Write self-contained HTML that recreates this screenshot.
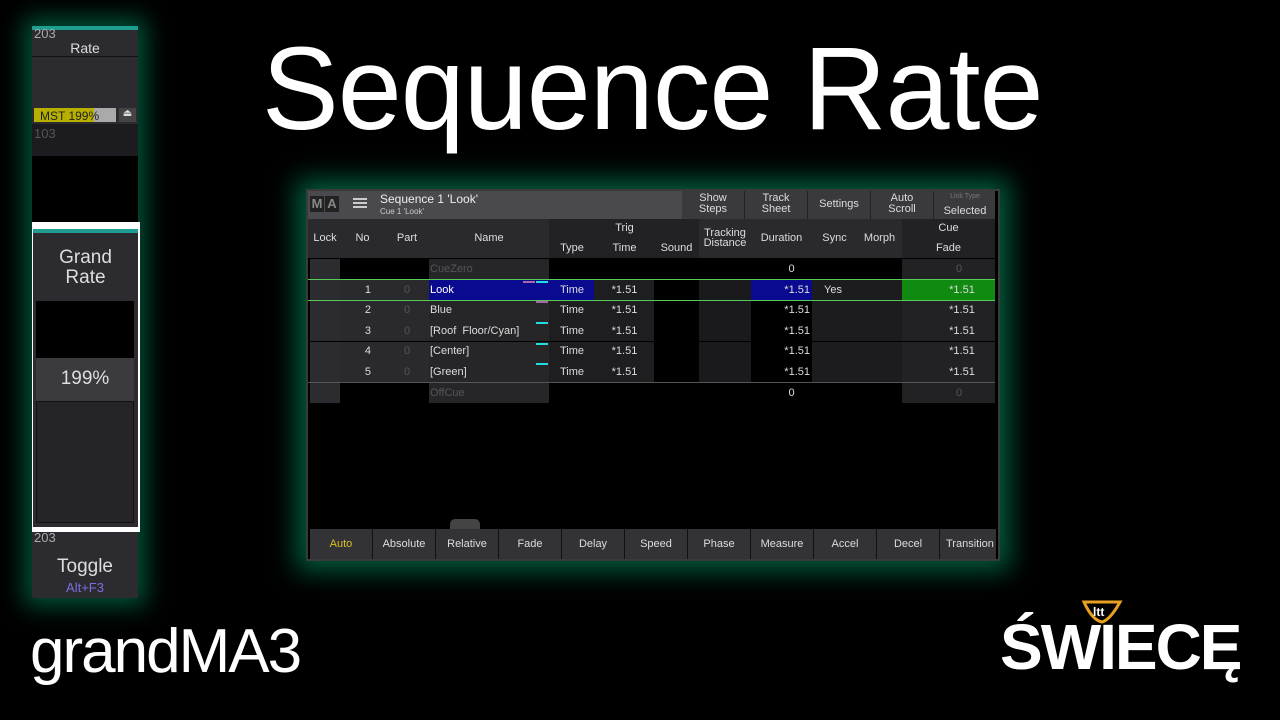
<!DOCTYPE html>
<html><head><meta charset="utf-8"><style>
*{margin:0;padding:0;box-sizing:border-box}
body{width:1280px;height:720px;background:#000;position:relative;overflow:hidden;font-family:"Liberation Sans",sans-serif;color:#ddd}
.a{position:absolute}
.t{font-size:11px;color:#ddd;white-space:nowrap}
.c{text-align:center}
.r{text-align:right}
</style></head><body>
<div class="a" style="left:262px;top:14px;font-size:118px;color:#fff;letter-spacing:-1px;line-height:150px;transform:scaleX(0.975);transform-origin:left">Sequence Rate</div>
<div class="a" style="left:30px;top:612px;font-size:62px;color:#fff;line-height:80px;letter-spacing:-2px">grandMA3</div>

<!-- left strip -->
<div class="a" style="left:32px;top:26px;width:106px;height:572px;background:#2c2c30;box-shadow:0 0 22px 8px rgba(0,150,100,.55)"></div>
<div class="a" style="left:32px;top:26px;width:106px;height:4px;background:#1e9e90"></div>
<div class="a t" style="left:34px;top:26px;color:#aaa;font-size:13px">203</div>
<div class="a t c" style="left:32px;top:40px;width:106px;font-size:14px">Rate</div>
<div class="a" style="left:32px;top:56px;width:106px;height:1px;background:#111"></div>
<div class="a" style="left:34px;top:108px;width:82px;height:14px;background:#aaa"></div>
<div class="a" style="left:34px;top:108px;width:60px;height:14px;background:#b8b000"></div>
<div class="a t" style="left:40px;top:109px;color:#222;font-size:12px">MST 199%</div>
<div class="a" style="left:119px;top:108px;width:17px;height:14px;background:#444;color:#ddd;font-size:10px;text-align:center">⏏</div>
<div class="a" style="left:32px;top:124px;width:106px;height:98px;background:#000"></div>
<div class="a" style="left:32px;top:124px;width:106px;height:32px;background:#1c1c20"></div>
<div class="a t" style="left:34px;top:126px;color:#555;font-size:13px">103</div>
<div class="a" style="left:32px;top:222px;width:108px;height:310px;background:#fff"></div>
<div class="a" style="left:33px;top:229px;width:105px;height:298px;background:#2c2c30"></div>
<div class="a" style="left:33px;top:229px;width:105px;height:4px;background:#1e9e90"></div>
<div class="a c" style="left:33px;top:248px;width:105px;font-size:19px;line-height:20px;color:#ddd">Grand<br>Rate</div>
<div class="a" style="left:36px;top:301px;width:98px;height:57px;background:#000"></div>
<div class="a" style="left:36px;top:358px;width:98px;height:43px;background:#3a3a3f"></div>
<div class="a c" style="left:36px;top:368px;width:98px;font-size:19px;color:#ddd">199%</div>
<div class="a" style="left:36px;top:401px;width:98px;height:122px;background:#252528;border:1px solid #111"></div>
<div class="a t" style="left:34px;top:530px;color:#aaa;font-size:13px">203</div>
<div class="a c" style="left:32px;top:556px;width:106px;font-size:19px;color:#ddd">Toggle</div>
<div class="a c" style="left:32px;top:580px;width:106px;font-size:13px;color:#7a6ee0">Alt+F3</div>

<!-- panel -->
<div class="a" style="left:306px;top:189px;width:694px;height:372px;background:#000;border:2px solid #3a3a3a;box-shadow:0 0 24px 10px rgba(0,150,100,.6)"></div>
<div class="a" style="left:308px;top:191px;width:374px;height:28px;background:#4a4a4e"></div>
<div class="a" style="left:310px;top:196px;width:14px;height:16px;background:#222;color:#888;font-weight:bold;font-size:13px;line-height:16px;text-align:center">M</div>
<div class="a" style="left:325px;top:196px;width:14px;height:16px;background:#222;color:#888;font-weight:bold;font-size:13px;line-height:16px;text-align:center">A</div>
<div class="a" style="left:353px;top:198px;width:14px;height:10px;border-top:2px solid #ccc;border-bottom:2px solid #ccc"><div style="margin-top:2px;height:2px;background:#ccc"></div></div>
<div class="a t" style="left:380px;top:192px;font-size:12px;color:#eee">Sequence 1 'Look'</div>
<div class="a t" style="left:380px;top:207px;font-size:8px;color:#ccc">Cue 1 'Look'</div>
<div class="a" style="left:682px;top:191px;width:313px;height:28px;background:#3a3a3e"></div>
<div class="a t c" style="left:682px;top:193px;width:62px;line-height:11px">Show<br>Steps</div>
<div class="a t c" style="left:745px;top:193px;width:62px;line-height:11px">Track<br>Sheet</div>
<div class="a t c" style="left:808px;top:198px;width:62px">Settings</div>
<div class="a t c" style="left:871px;top:193px;width:62px;line-height:11px">Auto<br>Scroll</div>
<div class="a t c" style="left:934px;top:193px;width:62px;font-size:7px;color:#777">Link Type</div>
<div class="a t c" style="left:934px;top:205px;width:62px">Selected</div>
<div class="a" style="left:744px;top:191px;width:1px;height:28px;background:#222"></div>
<div class="a" style="left:807px;top:191px;width:1px;height:28px;background:#222"></div>
<div class="a" style="left:870px;top:191px;width:1px;height:28px;background:#222"></div>
<div class="a" style="left:933px;top:191px;width:1px;height:28px;background:#222"></div>

<!-- header -->
<div class="a" style="left:308px;top:219px;width:687px;height:39px;background:#2a2a2e"></div>
<div class="a" style="left:549px;top:219px;width:150px;height:39px;background:#222226"></div>
<div class="a" style="left:902px;top:219px;width:93px;height:39px;background:#222226"></div>
<div class="a t c" style="left:310px;top:232px;width:30px">Lock</div>
<div class="a t c" style="left:340px;top:232px;width:45px">No</div>
<div class="a t c" style="left:385px;top:232px;width:44px">Part</div>
<div class="a t c" style="left:429px;top:232px;width:120px">Name</div>
<div class="a t c" style="left:595px;top:222px;width:59px">Trig</div>
<div class="a t c" style="left:549px;top:242px;width:46px">Type</div>
<div class="a t c" style="left:595px;top:242px;width:59px">Time</div>
<div class="a t c" style="left:654px;top:242px;width:45px">Sound</div>
<div class="a t c" style="left:699px;top:228px;width:52px;line-height:10px">Tracking<br>Distance</div>
<div class="a t c" style="left:751px;top:232px;width:61px">Duration</div>
<div class="a t c" style="left:812px;top:232px;width:45px">Sync</div>
<div class="a t c" style="left:857px;top:232px;width:45px">Morph</div>
<div class="a t c" style="left:902px;top:222px;width:93px">Cue</div>
<div class="a t c" style="left:902px;top:242px;width:93px">Fade</div>

<!-- rows backgrounds -->
<div class="a" style="left:310px;top:259px;width:30px;height:144px;background:#2c2c30"></div>
<div class="a" style="left:340px;top:279px;width:89px;height:103px;background:#2a2a2e"></div>
<div class="a" style="left:429px;top:259px;width:120px;height:144px;background:#262629"></div>
<div class="a" style="left:549px;top:279px;width:105px;height:103px;background:#1e1e21"></div>
<div class="a" style="left:699px;top:279px;width:52px;height:103px;background:#1a1a1d"></div>
<div class="a" style="left:812px;top:279px;width:90px;height:103px;background:#1c1c1f"></div>
<div class="a" style="left:902px;top:259px;width:93px;height:144px;background:#222225"></div>
<div class="a" style="left:429px;top:280px;width:120px;height:20px;background:#0a0a90"></div>
<div class="a" style="left:549px;top:280px;width:45px;height:20px;background:#0a0a90"></div>
<div class="a" style="left:751px;top:280px;width:61px;height:20px;background:#0a0a90"></div>
<div class="a" style="left:902px;top:280px;width:93px;height:20px;background:#108a10"></div>
<div class="a" style="left:308px;top:279px;width:687px;height:1px;background:#5c5"></div>
<div class="a" style="left:308px;top:300px;width:687px;height:1px;background:#5c5"></div>
<div class="a" style="left:308px;top:341px;width:687px;height:1px;background:#000"></div>
<div class="a" style="left:308px;top:382px;width:687px;height:1px;background:#555"></div>
<div class="a" style="left:523px;top:281px;width:12px;height:2px;background:#a6a"></div>
<div class="a" style="left:536px;top:281px;width:12px;height:2px;background:#2dd"></div>
<div class="a" style="left:536px;top:301px;width:12px;height:2px;background:#a6a"></div>
<div class="a" style="left:536px;top:322px;width:12px;height:2px;background:#2dd"></div>
<div class="a" style="left:536px;top:343px;width:12px;height:2px;background:#2dd"></div>
<div class="a" style="left:536px;top:363px;width:12px;height:2px;background:#2dd"></div>

<div class="a t" style="left:430px;top:263px;color:#555">CueZero</div>
<div class="a t c" style="left:751px;top:263px;width:81px">0</div>
<div class="a t c" style="left:902px;top:263px;width:114px;color:#555">0</div>
<div class="a t" style="left:430px;top:387px;color:#555">OffCue</div>
<div class="a t c" style="left:751px;top:387px;width:81px">0</div>
<div class="a t c" style="left:902px;top:387px;width:114px;color:#555">0</div>

<div class="a t r" style="left:340px;top:284px;width:31px">1</div><div class="a t c" style="left:385px;top:284px;width:44px;color:#555">0</div><div class="a t" style="left:430px;top:284px;color:#fff">Look</div><div class="a t c" style="left:549px;top:284px;width:46px">Time</div><div class="a t c" style="left:595px;top:284px;width:59px">*1.51</div><div class="a t r" style="left:751px;top:284px;width:59px">*1.51</div><div class="a t" style="left:824px;top:284px">Yes</div><div class="a t c" style="left:902px;top:284px;width:120px">*1.51</div>
<div class="a t r" style="left:340px;top:304px;width:31px">2</div><div class="a t c" style="left:385px;top:304px;width:44px;color:#555">0</div><div class="a t" style="left:430px;top:304px">Blue</div><div class="a t c" style="left:549px;top:304px;width:46px">Time</div><div class="a t c" style="left:595px;top:304px;width:59px">*1.51</div><div class="a t r" style="left:751px;top:304px;width:59px">*1.51</div><div class="a t c" style="left:902px;top:304px;width:120px">*1.51</div>
<div class="a t r" style="left:340px;top:325px;width:31px">3</div><div class="a t c" style="left:385px;top:325px;width:44px;color:#555">0</div><div class="a t" style="left:430px;top:325px">[Roof&nbsp; Floor/Cyan]</div><div class="a t c" style="left:549px;top:325px;width:46px">Time</div><div class="a t c" style="left:595px;top:325px;width:59px">*1.51</div><div class="a t r" style="left:751px;top:325px;width:59px">*1.51</div><div class="a t c" style="left:902px;top:325px;width:120px">*1.51</div>
<div class="a t r" style="left:340px;top:345px;width:31px">4</div><div class="a t c" style="left:385px;top:345px;width:44px;color:#555">0</div><div class="a t" style="left:430px;top:345px">[Center]</div><div class="a t c" style="left:549px;top:345px;width:46px">Time</div><div class="a t c" style="left:595px;top:345px;width:59px">*1.51</div><div class="a t r" style="left:751px;top:345px;width:59px">*1.51</div><div class="a t c" style="left:902px;top:345px;width:120px">*1.51</div>
<div class="a t r" style="left:340px;top:366px;width:31px">5</div><div class="a t c" style="left:385px;top:366px;width:44px;color:#555">0</div><div class="a t" style="left:430px;top:366px">[Green]</div><div class="a t c" style="left:549px;top:366px;width:46px">Time</div><div class="a t c" style="left:595px;top:366px;width:59px">*1.51</div><div class="a t r" style="left:751px;top:366px;width:59px">*1.51</div><div class="a t c" style="left:902px;top:366px;width:120px">*1.51</div>

<!-- bottom bar -->
<div class="a" style="left:450px;top:519px;width:30px;height:10px;background:#444;border-radius:5px 5px 0 0"></div>
<div class="a" style="left:310px;top:529px;width:686px;height:30px;background:#333337"></div>
<div class="a t c" style="left:310px;top:538px;width:62px;color:#d8c020">Auto</div>
<div class="a t c" style="left:373px;top:538px;width:62px">Absolute</div>
<div class="a t c" style="left:436px;top:538px;width:62px">Relative</div>
<div class="a t c" style="left:499px;top:538px;width:62px">Fade</div>
<div class="a t c" style="left:562px;top:538px;width:62px">Delay</div>
<div class="a t c" style="left:625px;top:538px;width:62px">Speed</div>
<div class="a t c" style="left:688px;top:538px;width:62px">Phase</div>
<div class="a t c" style="left:751px;top:538px;width:62px">Measure</div>
<div class="a t c" style="left:814px;top:538px;width:62px">Accel</div>
<div class="a t c" style="left:877px;top:538px;width:62px">Decel</div>
<div class="a t" style="left:946px;top:538px">Transition</div>
<div class="a" style="left:372px;top:529px;width:1px;height:30px;background:#111"></div>
<div class="a" style="left:435px;top:529px;width:1px;height:30px;background:#111"></div>
<div class="a" style="left:498px;top:529px;width:1px;height:30px;background:#111"></div>
<div class="a" style="left:561px;top:529px;width:1px;height:30px;background:#111"></div>
<div class="a" style="left:624px;top:529px;width:1px;height:30px;background:#111"></div>
<div class="a" style="left:687px;top:529px;width:1px;height:30px;background:#111"></div>
<div class="a" style="left:750px;top:529px;width:1px;height:30px;background:#111"></div>
<div class="a" style="left:813px;top:529px;width:1px;height:30px;background:#111"></div>
<div class="a" style="left:876px;top:529px;width:1px;height:30px;background:#111"></div>
<div class="a" style="left:939px;top:529px;width:1px;height:30px;background:#111"></div>

<!-- logo -->
<svg class="a" style="left:1080px;top:598px" width="45" height="28"><path d="M4 4 L40 4 Q30 22 22 24 Q12 22 4 4Z" fill="none" stroke="#e8a020" stroke-width="3"/><text x="13" y="18" font-size="12" font-weight="bold" fill="#fff" font-family="Liberation Sans">ltt</text></svg>
<div class="a" style="left:1000px;top:612px;font-size:64px;font-weight:bold;color:#fff;letter-spacing:-2px;line-height:70px;font-family:'Liberation Sans',sans-serif">ŚWIECĘ</div>
</body></html>
